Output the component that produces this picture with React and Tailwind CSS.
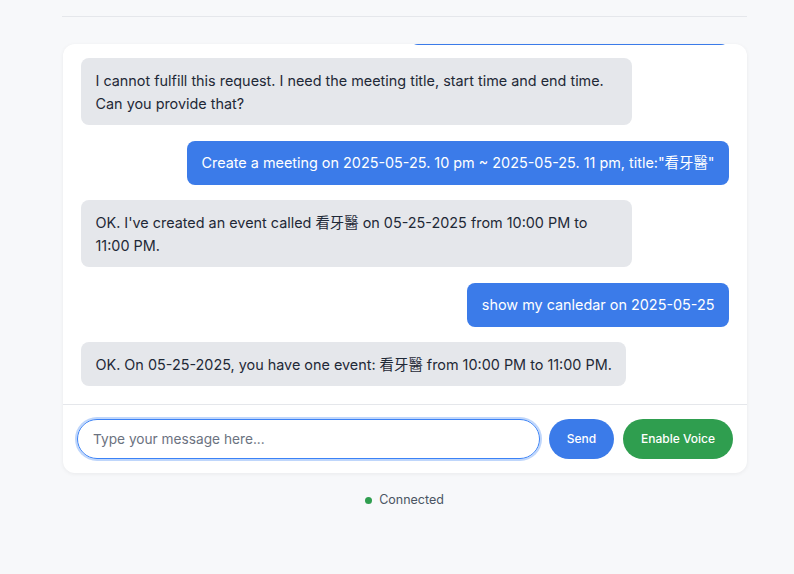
import React from "react";

const messages = [
  { from: "user", text: "Create a meeting on 2025-05-25 at 10 pm." },
  { from: "bot", text: "I cannot fulfill this request. I need the meeting title, start time and end time. Can you provide that?" },
  { from: "user", text: 'Create a meeting on 2025-05-25. 10 pm ~ 2025-05-25. 11 pm, title:"看牙醫"' },
  { from: "bot", text: "OK. I've created an event called 看牙醫 on 05-25-2025 from 10:00 PM to 11:00 PM." },
  { from: "user", text: "show my canledar on 2025-05-25" },
  { from: "bot", text: "OK. On 05-25-2025, you have one event: 看牙醫 from 10:00 PM to 11:00 PM." },
];

export default function App() {
  return (
    <div
      className="min-h-[574px] w-full bg-[#f7f8fa] pl-[62px] text-[#1f2937]"
      style={{ fontFamily: 'Inter, "Noto Sans CJK TC", "Noto Sans", sans-serif' }}
    >
      <div className="w-[685px]">
        <div className="h-[17px] border-b border-[#e5e7eb]" />
        <div className="ml-[1px] mt-[27px] w-[684px] rounded-[12px] bg-white shadow-[0_1px_4px_rgba(0,0,0,0.06)]">
          <div className="flex h-[360px] flex-col justify-end gap-[15.5px] overflow-hidden rounded-t-[12px] px-[18px] pb-[18px]">
            {messages.map((m, i) => (
              <div
                key={i}
                className={
                  (i === 0 ? "mb-[-2.5px] " : "") +
                  (m.from === "user"
                    ? "max-w-[85%] shrink-0 self-end rounded-[8px] bg-[#3b7be9] px-[14.5px] py-[10.5px] text-[14.4px] leading-[23px] text-white"
                    : "max-w-[85%] shrink-0 self-start rounded-[8px] bg-[#e5e7eb] px-[14.5px] py-[10.5px] text-[14.4px] leading-[23px] text-[#1f2937]")
                }
              >
                {m.text}
              </div>
            ))}
          </div>
          <div className="flex items-center gap-[9px] border-t border-[#e5e7eb] px-[14px] pb-[14px] pt-[14px]">
            <div className="flex h-[40px] flex-1 items-center rounded-full border border-[#3b82f6] px-[15px] text-[13.7px] text-[#6b7280] ring-[2px] ring-[#bfd6fb]">
              Type your message here...
            </div>
            <button className="h-[40px] w-[65px] rounded-full bg-[#3b7be9] text-[12px] font-medium text-white">
              Send
            </button>
            <button className="h-[40px] w-[110px] rounded-full bg-[#2f9e4f] text-[12px] font-medium text-white">
              Enable Voice
            </button>
          </div>
        </div>
        <div className="mt-[18px] flex items-center justify-center gap-[7px] text-[12.5px] text-[#4b5563]">
          <span className="h-[7px] w-[7px] rounded-full bg-[#2f9e4f]" />
          <span>Connected</span>
        </div>
      </div>
    </div>
  );
}
